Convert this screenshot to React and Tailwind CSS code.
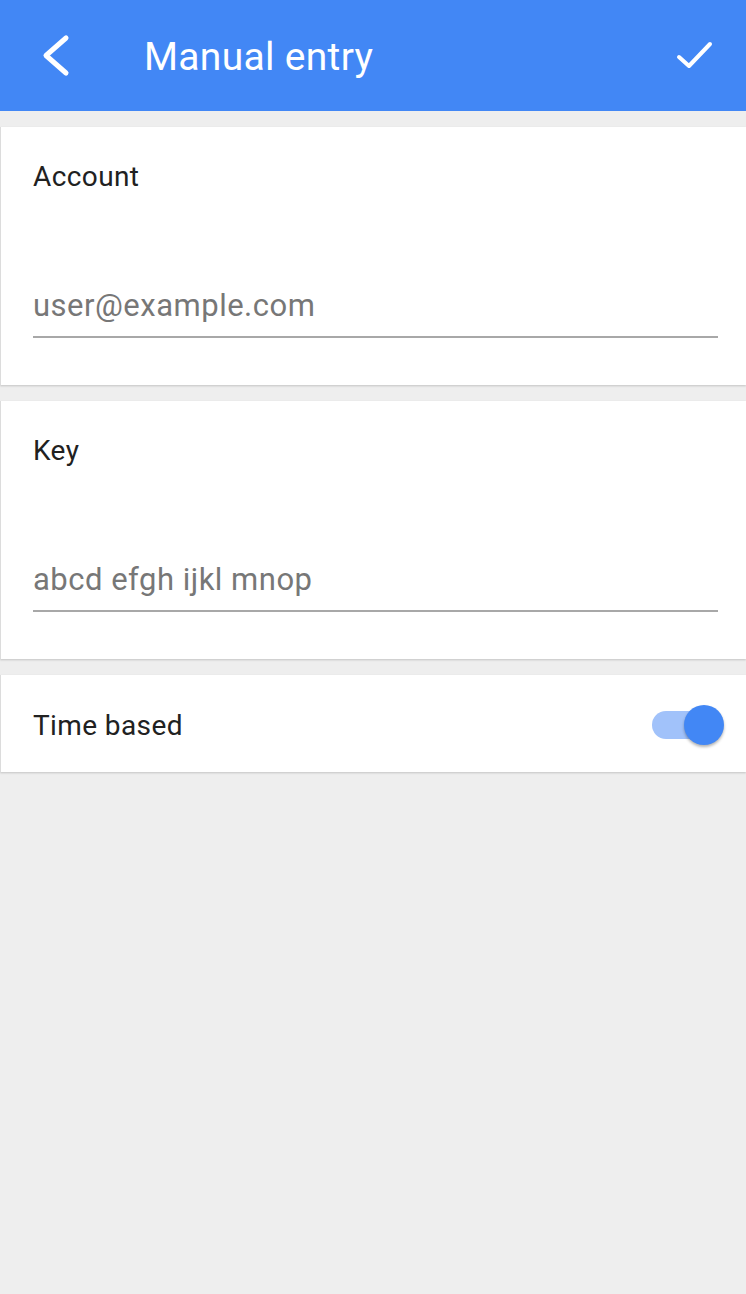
import React, { useState } from "react";

const font = { fontFamily: "Roboto, 'Noto Sans', sans-serif" };

function Field({ label, placeholder }) {
    return (
        <section className="bg-white border-l border-[#dcdcdc] shadow-[0_1px_2px_rgba(0,0,0,0.18)] pl-[32px] pr-[28px] pt-[34px] pb-[47px]">
            <div className="text-[28px] leading-[32px] tracking-[0.4px] text-[#212121]">{label}</div>
            <input
                placeholder={placeholder}
                className="mt-[95px] block w-full h-[50px] pb-[13px] border-b-2 border-[#a8a8a8] bg-transparent outline-none text-[31px] tracking-[0.5px] text-[#212121] placeholder:text-[#777777]"
            />
        </section>
    );
}

export default function App() {
    const [timeBased, setTimeBased] = useState(true);

    return (
        <main className="min-h-[1294px] w-full bg-[#eeeeee]" style={font}>
            {/* HEADER */}
            <header className="h-[111px] bg-[#4287f5] flex items-center">
                <button className="w-[111px] h-full flex items-center pl-[36px]">
                    <svg width="40" height="48" viewBox="0 0 40 48" fill="none">
                        <path d="M30 6 L10 23.5 L30 41" stroke="white" strokeWidth="5" strokeLinecap="round" strokeLinejoin="round" />
                    </svg>
                </button>
                <h1 className="ml-[33px] mt-[4px] text-[39px] tracking-[0.3px] text-white leading-none flex-1">Manual entry</h1>
                <button className="h-full pr-[33px] flex items-center">
                    <svg width="40" height="32" viewBox="0 0 40 32" fill="none">
                        <path d="M6 17 L16 26 L37 4" stroke="white" strokeWidth="4" strokeLinecap="round" strokeLinejoin="round" />
                    </svg>
                </button>
            </header>

            <div className="pt-4 flex flex-col gap-4">
                <Field label="Account" placeholder="user@example.com" />
                <Field label="Key" placeholder="abcd efgh ijkl mnop" />

                {/* TIME BASED */}
                <section className="bg-white border-l border-[#dcdcdc] shadow-[0_1px_2px_rgba(0,0,0,0.18)] h-[97px] flex items-center justify-between pl-[32px] pr-[22px]">
                    <span className="text-[28px] tracking-[0.4px] text-[#212121] pt-[4px]">Time based</span>
                    <button
                        onClick={() => setTimeBased(!timeBased)}
                        className="relative w-[72px] h-[40px] flex items-center mt-[3px]"
                    >
                        <span className={`block w-[68px] h-[28px] rounded-full ${timeBased ? "bg-[#a1c2fa]" : "bg-[#bdbdbd]"}`}></span>
                        <span
                            className={`absolute top-0 w-[40px] h-[40px] rounded-full shadow-[0_2px_3px_rgba(0,0,0,0.3)] ${timeBased ? "right-0 bg-[#4287f5]" : "left-0 bg-[#fafafa]"}`}
                        ></span>
                    </button>
                </section>
            </div>
        </main>
    );
}
